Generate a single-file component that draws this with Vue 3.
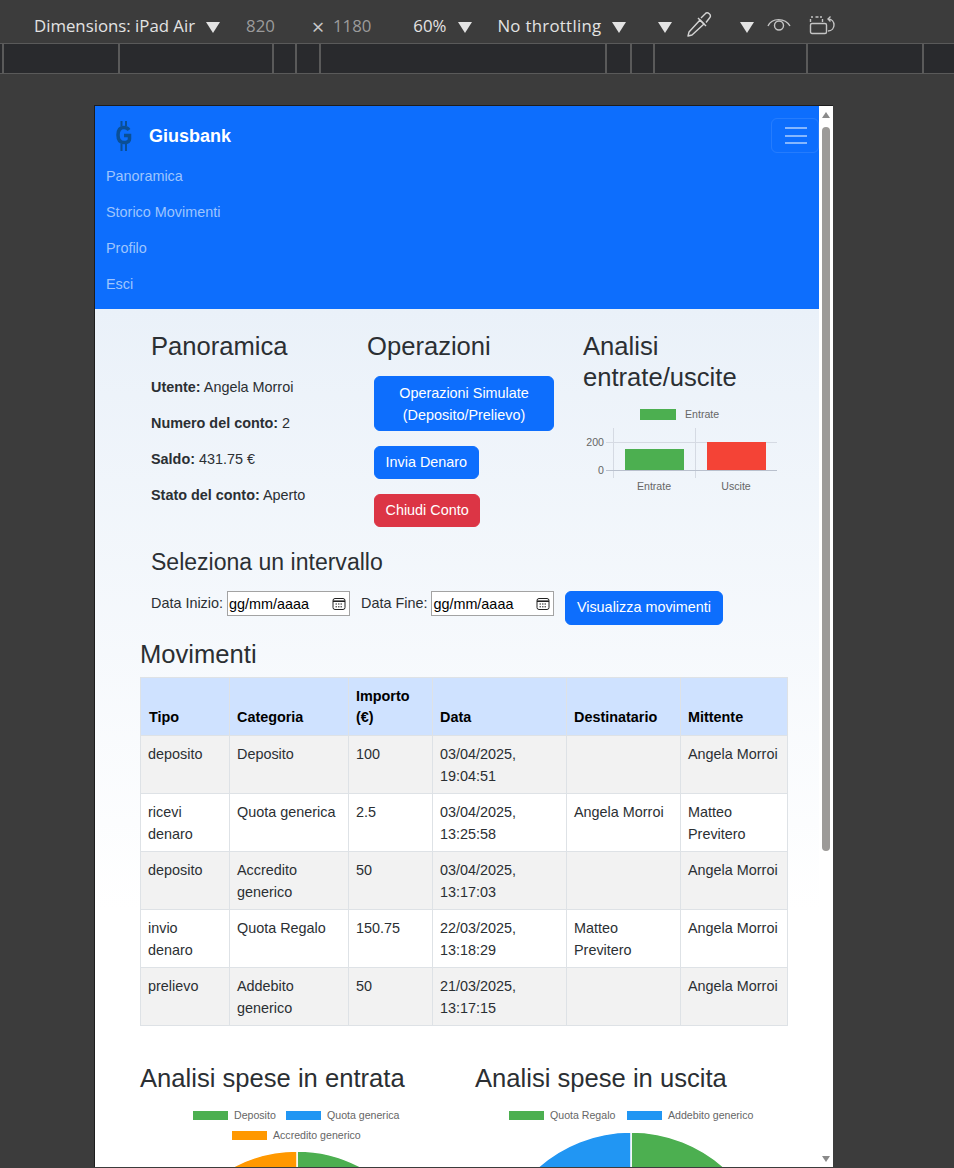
<template>
  <div class="devtools">
    <header class="toolbar">
      <span class="tool-label">Dimensions: iPad Air</span>
      <i class="tri tri-dim"></i>
      <span class="tool-num w-num">820</span>
      <span class="tool-x">×</span>
      <span class="tool-num">1180</span>
      <span class="tool-label zoom-label">60%</span>
      <i class="tri tri-s tri-zoom"></i>
      <span class="tool-label throttle">No throttling</span>
      <i class="tri tri-s"></i>
      <i class="tri tri-extra"></i>
      <svg class="dropper" width="26" height="28" viewBox="0 0 26 28" fill="none" stroke="#d4d4d4" stroke-width="1.4" stroke-linejoin="round">
        <path d="M2 26l1-4L14 10l4 4L6 25z" />
        <path d="M12 8l8 8" />
        <path d="M15 8l4-4a3 3 0 0 1 4.500 4l-3.500 4.500" />
      </svg>
      <i class="tri tri-drop"></i>
      <svg class="eye" width="24" height="20" viewBox="0 0 24 20" fill="none" stroke="#c4c4c4" stroke-width="1.4">
        <path d="M1 13C5 4.500 18 4.500 23 13" />
        <circle cx="12" cy="12.500" r="4.500" />
      </svg>
      <svg class="rotate" width="27" height="22" viewBox="0 0 27 22" fill="none" stroke="#c4c4c4" stroke-width="1.4">
        <rect x="1.500" y="9.500" width="16" height="10" rx="1.500" />
        <path d="M2 3h2M6.500 3h3M11 3h2M1.500 5v3M13.500 5v3" />
        <path d="M19 5c4 0 6 3 6 6s-2 6-6 6M21.500 2.500L19 5l2.500 2.500" />
      </svg>
    </header>
    <div class="ruler">
      <span v-for="w in rulerGaps" :key="w" class="tick" :style="{ width: w + 'px' }"></span>
    </div>

    <div class="stage">
      <div class="device">
        <div class="page">
          <nav class="navbar">
            <div class="nav-top">
              <div class="brand">
                <svg class="brand-logo" width="22" height="32" viewBox="0 0 22 32" fill="none" stroke="#0a4f96">
                  <path d="M16 9C14.500 6.800 12.500 6.500 11 6.500C7 6.500 5 9.500 5 14C5 18.500 7 21.500 11 21.500C14.500 21.500 16.500 20 16.500 18V14.500H11" stroke-width="3.500" />
                  <path d="M8.500 0v5M13 0v5M8.500 23v7M13 23v7" stroke-width="2" />
                </svg>
                <span>Giusbank</span>
              </div>
              <button class="toggler" type="button" aria-label="Menu">
                <i></i><i></i><i></i>
              </button>
            </div>
            <ul class="nav-links">
              <li v-for="link in navLinks" :key="link">{{ link }}</li>
            </ul>
          </nav>

          <main class="content">
            <section class="overview">
              <div class="col">
                <h2>Panoramica</h2>
                <p><b>Utente:</b> Angela Morroi</p>
                <p><b>Numero del conto:</b> 2</p>
                <p><b>Saldo:</b> 431.75 €</p>
                <p><b>Stato del conto:</b> Aperto</p>
              </div>
              <div class="col">
                <h2>Operazioni</h2>
                <div class="actions">
                  <button class="btn btn-wide" type="button">Operazioni Simulate (Deposito/Prelievo)</button>
                  <button class="btn" type="button">Invia Denaro</button>
                  <button class="btn btn-danger" type="button">Chiudi Conto</button>
                </div>
              </div>
              <div class="col">
                <h2>Analisi entrate/uscite</h2>
                <svg class="bar-chart" width="200" height="100" viewBox="0 0 200 100">
                  <rect x="57" y="9" width="36" height="11" fill="#4caf50" />
                  <text x="102" y="17.500" class="chart-text">Entrate</text>
                  <path d="M23 42.500h171M30.500 28v50M112.500 28v50" stroke="#d5dae3" fill="none" />
                  <rect x="42" y="49" width="59" height="21" fill="#4caf50" />
                  <rect x="124" y="42" width="59" height="28" fill="#f44336" />
                  <path d="M23 70.500h171" stroke="#b9c0cd" fill="none" />
                  <text x="21" y="46" text-anchor="end" class="chart-text">200</text>
                  <text x="21" y="74" text-anchor="end" class="chart-text">0</text>
                  <text x="71" y="90" text-anchor="middle" class="chart-text">Entrate</text>
                  <text x="153" y="90" text-anchor="middle" class="chart-text">Uscite</text>
                </svg>
              </div>
            </section>

            <section class="range">
              <h3>Seleziona un intervallo</h3>
              <form class="range-form" @submit.prevent>
                <label class="field">
                  Data Inizio:
                  <span class="date-input">
                    <input type="text" placeholder="gg/mm/aaaa" />
                    <svg width="14" height="14" viewBox="0 0 14 14" fill="none" stroke="#222">
                      <rect x="1" y="1.500" width="12" height="11" rx="2" />
                      <path d="M1 4.200h12" stroke-width="1.600" />
                      <path d="M3.500 7h7M3.500 9.800h7" stroke-dasharray="1.500 1" />
                    </svg>
                  </span>
                </label>
                <label class="field">
                  Data Fine:
                  <span class="date-input">
                    <input type="text" placeholder="gg/mm/aaaa" />
                    <svg width="14" height="14" viewBox="0 0 14 14" fill="none" stroke="#222">
                      <rect x="1" y="1.500" width="12" height="11" rx="2" />
                      <path d="M1 4.200h12" stroke-width="1.600" />
                      <path d="M3.500 7h7M3.500 9.800h7" stroke-dasharray="1.500 1" />
                    </svg>
                  </span>
                </label>
                <button class="btn" type="submit">Visualizza movimenti</button>
              </form>
            </section>

            <section class="movements">
              <h2>Movimenti</h2>
              <table>
                <thead>
                  <tr>
                    <th class="c-type">Tipo</th>
                    <th class="c-cat">Categoria</th>
                    <th class="c-amount">Importo (€)</th>
                    <th class="c-date">Data</th>
                    <th class="c-dest">Destinatario</th>
                    <th>Mittente</th>
                  </tr>
                </thead>
                <tbody>
                  <tr v-for="row in movements" :key="row.date">
                    <td>{{ row.type }}</td>
                    <td>{{ row.category }}</td>
                    <td>{{ row.amount }}</td>
                    <td>{{ row.date }}</td>
                    <td>{{ row.to }}</td>
                    <td>{{ row.from }}</td>
                  </tr>
                </tbody>
              </table>
            </section>

            <section class="pies">
              <div class="pie-col">
                <h2>Analisi spese in entrata</h2>
                <svg class="pie" width="335" height="330" viewBox="0 0 335 330">
                  <g v-for="l in incomeLegend" :key="l.label">
                    <rect :x="l.x" :y="l.y" width="35" height="9" :fill="l.color" />
                    <text :x="l.x + 41" :y="l.y + 8" class="chart-text">{{ l.label }}</text>
                  </g>
                  <path v-for="s in incomeSlices" :key="s.color" :d="s.d" :fill="s.color" stroke="#fff" stroke-width="1.500" />
                </svg>
              </div>
              <div class="pie-col">
                <h2>Analisi spese in uscita</h2>
                <svg class="pie" width="335" height="330" viewBox="0 0 335 330">
                  <g v-for="l in outcomeLegend" :key="l.label">
                    <rect :x="l.x" :y="l.y" width="35" height="9" :fill="l.color" />
                    <text :x="l.x + 41" :y="l.y + 8" class="chart-text">{{ l.label }}</text>
                  </g>
                  <path v-for="s in outcomeSlices" :key="s.color" :d="s.d" :fill="s.color" stroke="#fff" stroke-width="1.500" />
                </svg>
              </div>
            </section>
          </main>
        </div>

        <aside class="scrollbar">
          <i class="arrow arrow-up"></i>
          <span class="thumb"></span>
          <i class="arrow arrow-down"></i>
        </aside>
      </div>
    </div>
  </div>
</template>

<script setup>
const rulerGaps = [4, 116, 154, 23, 24, 286, 25, 23, 153, 116, 40]

const navLinks = ['Panoramica', 'Storico Movimenti', 'Profilo', 'Esci']

const movements = [
  { type: 'deposito', category: 'Deposito', amount: '100', date: '03/04/2025, 19:04:51', to: '', from: 'Angela Morroi' },
  { type: 'ricevi denaro', category: 'Quota generica', amount: '2.5', date: '03/04/2025, 13:25:58', to: 'Angela Morroi', from: 'Matteo Previtero' },
  { type: 'deposito', category: 'Accredito generico', amount: '50', date: '03/04/2025, 13:17:03', to: '', from: 'Angela Morroi' },
  { type: 'invio denaro', category: 'Quota Regalo', amount: '150.75', date: '22/03/2025, 13:18:29', to: 'Matteo Previtero', from: 'Angela Morroi' },
  { type: 'prelievo', category: 'Addebito generico', amount: '50', date: '21/03/2025, 13:17:15', to: '', from: 'Angela Morroi' }
]

const GREEN = '#4caf50'
const BLUE = '#2196f3'
const ORANGE = '#ff9800'

const incomeLegend = [
  { label: 'Deposito', color: GREEN, x: 53, y: 6 },
  { label: 'Quota generica', color: BLUE, x: 146, y: 6 },
  { label: 'Accredito generico', color: ORANGE, x: 92, y: 26 }
]

const outcomeLegend = [
  { label: 'Quota Regalo', color: GREEN, x: 34, y: 6 },
  { label: 'Addebito generico', color: BLUE, x: 152, y: 6 }
]

// same slices chart.js would draw, clockwise from 12 o'clock
const slices = (items, cx, cy, r) => {
  const total = items.reduce((sum, i) => sum + i.value, 0)
  let start = -Math.PI / 2
  return items.map((item) => {
    const end = start + (item.value / total) * Math.PI * 2
    const large = end - start > Math.PI ? 1 : 0
    const d = `M${cx} ${cy}L${cx + r * Math.cos(start)} ${cy + r * Math.sin(start)}A${r} ${r} 0 ${large} 1 ${cx + r * Math.cos(end)} ${cy + r * Math.sin(end)}Z`
    start = end
    return { d, color: item.color }
  })
}

const incomeSlices = slices(
  [
    { value: 100, color: GREEN },
    { value: 2.5, color: BLUE },
    { value: 50, color: ORANGE }
  ],
  157, 181, 135
)

const outcomeSlices = slices(
  [
    { value: 150.75, color: GREEN },
    { value: 50, color: BLUE }
  ],
  156, 167, 140
)
</script>

<style>
html, body {
  margin: 0;
  background: #3c3c3c;
  overflow: hidden;
}
</style>

<style scoped>
.devtools {
  height: 1168px;
  display: flex;
  flex-direction: column;
  background: #3c3c3c;
  overflow: hidden;
  font-family: "Liberation Sans", Arial, sans-serif;
}

.toolbar {
  height: 44px;
  box-sizing: border-box;
  padding: 7px 0 0 34px;
  display: flex;
  align-items: center;
  border-bottom: 1px solid #5a5a5a;
  font-family: "Open Sans", "Noto Sans", sans-serif;
  font-size: 16.8px;
  color: #e3e3e3;
  white-space: nowrap;
}

.tri {
  display: block;
  width: 0;
  height: 0;
  border-left: 7.5px solid transparent;
  border-right: 7.5px solid transparent;
  border-top: 11px solid #e3e3e3;
}

.tri-dim { margin: 4px 0 0 11px; }
.tri-s { margin: 4px 0 0 11px; }
.tri-zoom { margin-left: 12px; }
.tri-extra { margin: 4px 0 0 32px; }
.tri-drop { margin: 4px 0 0 28px; }

.tool-num { color: #9b9b9b; }
.w-num { margin-left: 26px; }
.tool-x { margin: 2px 8.5px 0 37px; font-size: 22px; color: #c8c8c8; }
.zoom-label { margin-left: 42px; }
.throttle { margin-left: 25px; letter-spacing: 0.3px; }

.dropper { margin: -2px 0 0 14px; }
.eye { margin: -4px 0 0 13px; }
.rotate { margin: 0 0 0 18px; }

.ruler {
  height: 30px;
  box-sizing: border-box;
  display: flex;
  background: #292a2d;
  border-bottom: 1px solid #5a5a5a;
}

.tick {
  flex: none;
  box-sizing: border-box;
  border-right: 2px solid #5a5a5a;
}

.stage {
  flex: 1;
  min-height: 0;
  padding: 31px 0 1px 94px;
}

.device {
  width: 739px;
  height: 100%;
  box-sizing: border-box;
  display: flex;
  overflow: hidden;
  border-left: 1px solid #1d1d1d;
  border-top: 1px solid #1d1d1d;
}

.page {
  flex: none;
  width: 724px;
  font-size: 14.4px;
  line-height: 21.6px;
  color: #2b2f33;
}

.navbar {
  height: 203px;
  box-sizing: border-box;
  padding: 12px 0 0 11px;
  background: #0d6efd;
}

.nav-top {
  display: flex;
  align-items: flex-start;
  justify-content: space-between;
}

.brand {
  display: flex;
  align-items: center;
  gap: 14px;
  height: 36px;
  padding: 1px 0 0 7px;
  font-size: 18px;
  font-weight: 700;
  color: #fff;
}

.toggler {
  width: 48px;
  height: 35px;
  box-sizing: border-box;
  padding: 0 11px 0 13px;
  display: flex;
  flex-direction: column;
  justify-content: center;
  gap: 5.5px;
  background: none;
  border: 1px solid rgba(255, 255, 255, 0.1);
  border-radius: 6px;
}

.toggler i {
  display: block;
  height: 2px;
  background: #86b7fe;
}

.nav-links {
  list-style: none;
  margin: 11px 0 0;
  padding: 0;
  display: flex;
  flex-direction: column;
  gap: 14.4px;
  color: #9ec5fe;
}

.content {
  padding: 22px 31px 0 45px;
  background: linear-gradient(#eaf1f9, #ffffff 600px);
}

.overview {
  display: flex;
  padding-left: 11px;
}

.col {
  flex: none;
  width: 216px;
}

h2, h3 {
  margin: 0;
  font-weight: 400;
  color: #2b2f33;
}

h2 {
  font-size: 25.6px;
  line-height: 31px;
}

h3 {
  font-size: 23.04px;
  line-height: 27px;
}

.col h2 { margin-bottom: 14px; }
.col:last-child h2 { margin-bottom: 7px; width: 200px; }

.col p {
  margin: 0 0 14.4px;
}

.col h2 + p {
  padding-top: 1px;
}

.actions {
  padding-left: 7px;
  display: flex;
  flex-direction: column;
  align-items: flex-start;
  gap: 14.5px;
}

.btn {
  padding: 5px 10.5px;
  font-family: "Liberation Sans", Arial, sans-serif;
  font-size: 14.4px;
  line-height: 21.6px;
  color: #fff;
  background: #0d6efd;
  border: 1px solid #0d6efd;
  border-radius: 6px;
}

.btn-wide { width: 180px; padding-top: 6px; padding-bottom: 4px; }
.btn-danger { background: #dc3545; border-color: #dc3545; }

.bar-chart {
  display: block;
}

.chart-text {
  font-size: 10.6px;
  fill: #666;
}

.range {
  margin-top: 22px;
  padding-left: 11px;
}

.range-form {
  margin-top: 15px;
  display: flex;
  align-items: flex-start;
}

.field {
  display: flex;
  align-items: center;
  gap: 4px;
  height: 25px;
  margin-right: 11px;
}

.date-input {
  box-sizing: border-box;
  width: 123px;
  height: 25px;
  display: flex;
  align-items: center;
  padding-right: 3px;
  background: #fff;
  border: 1px solid #a3a3a3;
}

.date-input input {
  flex: 1;
  min-width: 0;
  padding: 0 0 0 1px;
  border: 0;
  outline: 0;
  background: none;
  font-family: "Liberation Sans", Arial, sans-serif;
  font-size: 14.4px;
}

.date-input input::placeholder {
  color: #000;
  opacity: 1;
}

.movements {
  margin-top: 14px;
}

.movements h2 { margin-bottom: 7px; }

table {
  width: 648px;
  table-layout: fixed;
  border-collapse: collapse;
}

th, td {
  box-sizing: border-box;
  border: 1px solid #dee2e6;
  text-align: left;
  line-height: 21.5px;
}

th {
  padding: 8px 7px 6px;
  vertical-align: bottom;
  background: #cfe2ff;
  color: #000;
  font-weight: 700;
}

th:first-child {
  padding-left: 8px;
}

td {
  padding: 8.5px 7px 5.5px;
  vertical-align: top;
  background: #fff;
  height: 58px;
}

tbody tr:nth-child(odd) td { background: #f2f2f2; }

.c-type { width: 89px; }
.c-cat { width: 119px; }
.c-amount { width: 84px; }
.c-date { width: 134px; }
.c-dest { width: 114px; }

.pies {
  margin-top: 37px;
  display: flex;
}

.pie-col {
  flex: none;
  width: 335px;
}

.pie-col h2 {
  margin-bottom: 11px;
}

.pie {
  display: block;
}

.scrollbar {
  flex: none;
  width: 14px;
  box-sizing: border-box;
  padding-top: 6px;
  display: flex;
  flex-direction: column;
  align-items: center;
  background: #fff;
  position: relative;
}

.arrow {
  display: block;
  width: 0;
  height: 0;
  border-left: 4.5px solid transparent;
  border-right: 4.5px solid transparent;
}

.arrow-up { border-bottom: 6px solid #8a8a8a; }

.arrow-down {
  position: absolute;
  bottom: 5px;
  border-top: 6px solid #8a8a8a;
}

.thumb {
  display: block;
  width: 8px;
  height: 724px;
  margin-top: 9px;
  background: #9c9a98;
  border-radius: 4px;
}
</style>
